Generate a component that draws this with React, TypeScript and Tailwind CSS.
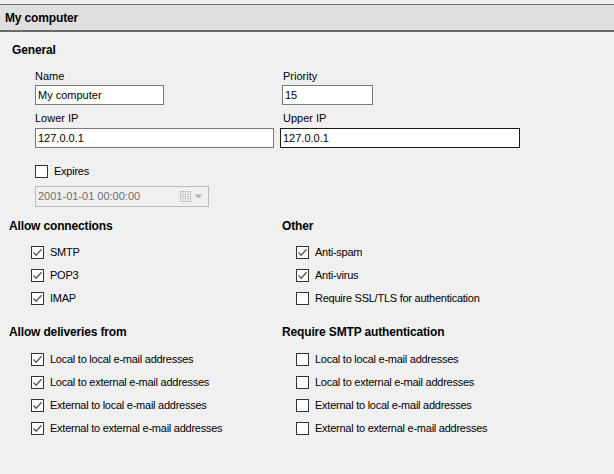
import React from "react";

const F = { fontFamily: '"Liberation Sans", Arial, sans-serif' };

function Box({ checked }: { checked?: boolean }) {
  return (
    <div className="w-[13px] h-[13px] border border-[#333333] bg-white flex items-center justify-center shrink-0">
      {checked && (
        <svg width="11" height="11" viewBox="0 0 11 11">
          <path d="M1.5 5.5 L4.2 8.2 L9.5 2.2" fill="none" stroke="#555555" strokeWidth="1.3" />
        </svg>
      )}
    </div>
  );
}

function Check({ label, checked }: { label: string; checked?: boolean }) {
  return (
    <div className="flex items-center gap-[6px] h-[13px]">
      <Box checked={checked} />
      <span className="text-[11px] leading-[13px] tracking-[-0.25px] text-black whitespace-nowrap">{label}</span>
    </div>
  );
}

function Input({ value, w, dark }: { value: string; w: string; dark?: boolean }) {
  return (
    <div
      className={`${w} h-[20px] bg-white border ${dark ? "border-[#1a1a1a]" : "border-[#7a7a7a]"} flex items-center pl-[2px] text-[11px] text-black`}
    >
      {value}
    </div>
  );
}

function Heading({ children }: { children: React.ReactNode }) {
  return <div className="font-bold text-[12px] leading-[14px] tracking-[-0.15px] text-black whitespace-nowrap">{children}</div>;
}

export default function App() {
  const pairs = [
    "Local to local e-mail addresses",
    "Local to external e-mail addresses",
    "External to local e-mail addresses",
    "External to external e-mail addresses",
  ];
  return (
    <div className="w-[614px] h-[474px] bg-[#f0f0f0] pt-[4px] overflow-hidden" style={F}>
      <div className="h-[28px] border-t border-b-2 border-[#6a6a6a] bg-[#dfdfdf] flex items-center pl-[5px]">
        <Heading>My computer</Heading>
      </div>

      <div className="pl-[12px] mt-[11px]">
        <Heading>General</Heading>
      </div>

      <div className="pl-[35px] mt-[12px] flex">
        <div className="w-[247px] flex flex-col">
          <div className="text-[11px] leading-[14px] h-[14px]">Name</div>
          <div className="mt-[2px]">
            <Input value="My computer" w="w-[129px]" />
          </div>
          <div className="text-[11px] leading-[14px] h-[14px] mt-[6px]">Lower IP</div>
          <div className="mt-[3px]">
            <Input value="127.0.0.1" w="w-[239px]" />
          </div>
        </div>
        <div className="flex flex-col">
          <div className="text-[11px] leading-[14px] h-[14px] pl-[1px]">Priority</div>
          <div className="mt-[2px]">
            <Input value="15" w="w-[91px]" />
          </div>
          <div className="text-[11px] leading-[14px] h-[14px] mt-[6px] pl-[1px]">Upper IP</div>
          <div className="mt-[3px] -ml-[2px]">
            <Input value="127.0.0.1" w="w-[240px]" dark />
          </div>
        </div>
      </div>

      <div className="pl-[35px] mt-[17px]">
        <Check label="Expires" />
        <div className="mt-[8px] w-[174px] h-[21px] border border-[#bcbcbc] bg-[#f0f0f0] flex items-center pl-[2px] text-[11px] text-[#6d6d6d]">
          <span className="flex-1">2001-01-01 00:00:00</span>
          <svg width="11" height="11" viewBox="0 0 11 11" className="mr-[3px]">
            <rect x="0.5" y="0.5" width="10" height="10" fill="#f4f4f4" stroke="#c4c4c4" />
            <path d="M0.5 3.5H10.5M0.5 5.5H10.5M0.5 7.5H10.5M3 0.5V10.5M5.5 0.5V10.5M8 0.5V10.5" stroke="#d0d0d0" strokeWidth="1" />
          </svg>
          <svg width="9" height="5" viewBox="0 0 9 5" className="mr-[5px]">
            <path d="M0.5 0.5H8.5L4.5 4.5Z" fill="#b4b4b4" />
          </svg>
        </div>
      </div>

      <div className="flex mt-[12px]">
        <div className="w-[282px] pl-[9px]">
          <Heading>Allow connections</Heading>
          <div className="pl-[22px] mt-[13px] flex flex-col gap-[10px]">
            <Check label="SMTP" checked />
            <Check label="POP3" checked />
            <Check label="IMAP" checked />
          </div>
        </div>
        <div>
          <Heading>Other</Heading>
          <div className="pl-[14px] mt-[13px] flex flex-col gap-[10px]">
            <Check label="Anti-spam" checked />
            <Check label="Anti-virus" checked />
            <Check label="Require SSL/TLS for authentication" />
          </div>
        </div>
      </div>

      <div className="flex mt-[20px]">
        <div className="w-[282px] pl-[9px]">
          <Heading>Allow deliveries from</Heading>
          <div className="pl-[22px] mt-[14px] flex flex-col gap-[10px]">
            {pairs.map((p) => (
              <Check key={p} label={p} checked />
            ))}
          </div>
        </div>
        <div>
          <Heading>Require SMTP authentication</Heading>
          <div className="pl-[14px] mt-[14px] flex flex-col gap-[10px]">
            {pairs.map((p) => (
              <Check key={p} label={p} />
            ))}
          </div>
        </div>
      </div>
    </div>
  );
}
